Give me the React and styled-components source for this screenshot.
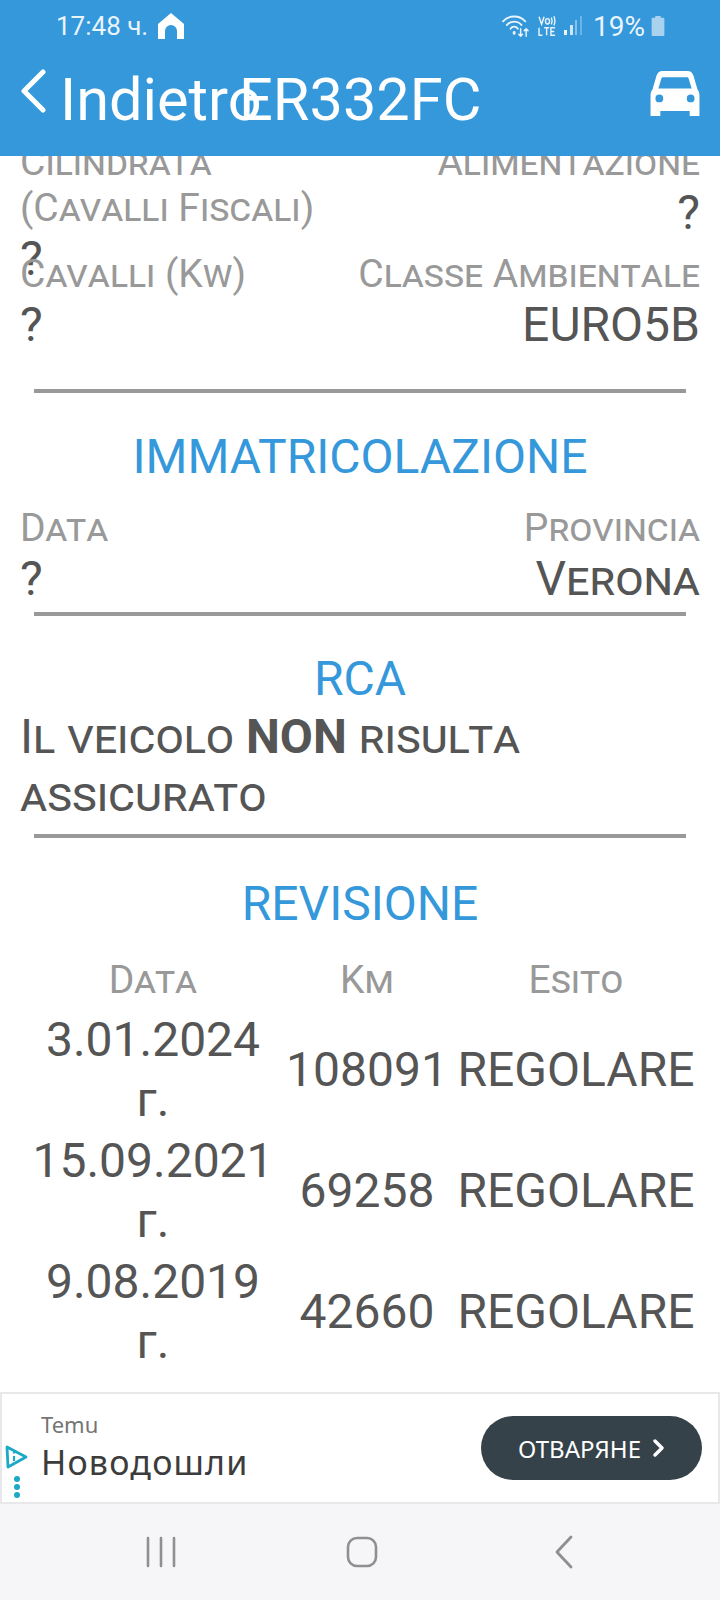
import React from 'react';
import styled, { createGlobalStyle } from 'styled-components';

const Global = createGlobalStyle`
  html, body { margin: 0; padding: 0; background: #fff; }
  body { font-family: Roboto, "Noto Sans", sans-serif; }
`;

const Screen = styled.div`
  width: 720px;
  height: 1600px;
  display: flex;
  flex-direction: column;
  overflow: hidden;
  background: #fff;
`;

const Header = styled.header`
  height: 156px;
  flex: none;
  background: #3498db;
  color: #fff;
  display: flex;
  flex-direction: column;
  position: relative;
  z-index: 2;
`;

const StatusBar = styled.div`
  height: 52px;
  padding: 0 55px 0 56px;
  display: flex;
  align-items: center;
  justify-content: space-between;
`;

const StatusGroup = styled.div`
  display: flex;
  align-items: center;
  gap: ${(p) => p.$gap}px;
  font-size: 26px;
  color: #eaf4fb;
`;

const Percent = styled.span`
  font-size: 28px;
  margin-left: 5px;
`;

const NavBar = styled.div`
  flex: 1;
  display: flex;
  align-items: center;
  padding: 0 20px 8px 21px;
`;

const NavTitle = styled.span`
  font-size: 59.5px;
  line-height: 68px;
  white-space: nowrap;
`;

const BackLabel = styled(NavTitle)`
  width: 179px;
  margin-left: 14px;
`;

const BackSvg = styled.svg`
  margin-top: -18px;
`;

const NavRight = styled.div`
  margin-left: auto;
  display: flex;
  margin-top: -14px;
`;

const Content = styled.main`
  height: 1236px;
  flex: none;
  overflow: hidden;
  padding: 0 20px;
`;

const Scroller = styled.div`
  margin-top: -17px;
`;

const Row = styled.div`
  display: flex;
  justify-content: space-between;
  height: ${(p) => p.$height}px;
  margin-top: ${(p) => p.$top || 0}px;
`;

const Field = styled.div`
  text-align: ${(p) => (p.$right ? 'right' : 'left')};
`;

const Label = styled.div`
  font-size: 39px;
  line-height: 46px;
  color: #999;
  font-variant: small-caps;
`;

const Value = styled.div`
  font-size: 48px;
  line-height: 56px;
  color: #555;
  font-variant: ${(p) => (p.$caps ? 'small-caps' : 'normal')};
`;

const Divider = styled.hr`
  border: 0;
  height: 4px;
  background: #999;
  margin: 0 14px;
`;

const SectionTitle = styled.h2`
  margin: ${(p) => p.$top}px 0 0;
  font-size: 48px;
  line-height: 54px;
  font-weight: 400;
  color: #3498db;
  text-align: center;
`;

const Notice = styled.p`
  margin: 2px 0 10px;
  font-size: 48px;
  line-height: 58px;
  color: #555;
  font-variant: small-caps;
  width: 560px;
  strong { font-variant: normal; }
`;

const Table = styled.div`
  display: grid;
  grid-template-columns: 250px 178px 240px;
  padding: 26px 0 0 8px;
  text-align: center;
  color: #555;
`;

const HeadCell = styled.div`
  font-size: 39px;
  line-height: 46px;
  color: #999;
  font-variant: small-caps;
  padding-bottom: 6px;
`;

const Cell = styled.div`
  font-size: 48px;
  line-height: 60px;
  height: 121px;
  display: flex;
  align-items: center;
  justify-content: center;
`;

const Ad = styled.aside`
  height: 112px;
  flex: none;
  box-sizing: border-box;
  background: #fff;
  border: 2px solid #e8e8ea;
  display: flex;
  align-items: center;
  position: relative;
  padding: 0 16px 0 39px;
`;

const AdBadge = styled.div`
  position: absolute;
  left: 3px;
  top: 51px;
  display: flex;
  flex-direction: column;
  gap: 6px;
`;

const AdText = styled.div`
  flex: 1;
  padding-bottom: 2px;
  font-family: "Noto Sans", sans-serif;
`;

const AdBrand = styled.div`
  font-size: 22px;
  line-height: 28px;
  margin-bottom: 2px;
  color: #757575;
`;

const AdHeadline = styled.div`
  font-size: 34px;
  line-height: 44px;
  color: #3c3c3c;
  letter-spacing: 1.2px;
`;

const AdButton = styled.button`
  width: 221px;
  height: 64px;
  padding: 0;
  border: 0;
  border-radius: 32px;
  background: #36424a;
  color: #fff;
  font-family: "Noto Sans", sans-serif;
  font-size: 24px;
  display: flex;
  align-items: center;
  justify-content: center;
  gap: 12px;
`;

const SystemNav = styled.nav`
  flex: 1;
  background: #f6f6f8;
  display: flex;
  align-items: center;
  justify-content: space-between;
  padding: 0 146px;
  svg:nth-child(2) { margin-right: 6px; }
`;

const HomeIcon = () => (
  <svg width="26" height="26" viewBox="0 0 26 26" fill="#fff">
    <path d="M13 0 L26 11 V26 H19 V18 A6 6 0 0 0 7 18 V26 H0 V11 Z" />
  </svg>
);

const WifiIcon = () => (
  <svg width="30" height="24" viewBox="0 0 30 26" fill="none" stroke="#eaf4fb" strokeWidth="2" strokeLinecap="round">
    <path d="M1 8 C7 1 19 1 25 8" />
    <path d="M5 12 C9 7 17 7 21 12" />
    <path d="M9 16 C11 13 15 13 17 16" />
    <path d="M13 20 v1" strokeWidth="3" />
    <path d="M20 16 v8 M18 22 l2 2 l2 -2 M26 24 v-8 M24 18 l2 -2 l2 2" strokeWidth="1.6" />
  </svg>
);

const VolteIcon = () => (
  <svg width="21" height="22" viewBox="0 0 22 26" fill="none" stroke="#eaf4fb" strokeWidth="1.7">
    <path d="M1 2 L4 11 L7 2" />
    <ellipse cx="11" cy="7.5" rx="2.4" ry="3.2" />
    <path d="M15.5 3 Q17.5 7 15.5 11 M18.5 1.5 Q21 7 18.5 12.5" />
    <path d="M1 15 V24 H5 M7 15 H13 M10 15 V24 M20 15 H15 V24 H20 M15 19.5 H19" />
  </svg>
);

const SignalIcon = () => (
  <svg width="18" height="20" viewBox="0 0 18 20" fill="#eaf4fb">
    <rect x="0" y="14" width="3" height="5" />
    <rect x="6" y="9" width="3" height="10" opacity="0.85" />
    <rect x="11" y="4" width="2" height="15" opacity="0.45" />
    <rect x="16" y="0" width="2" height="19" opacity="0.3" />
  </svg>
);

const BatteryIcon = () => (
  <svg width="14" height="20" viewBox="0 0 14 22" fill="#a9d2ef">
    <path d="M4 0 H10 V2 H13 A1 1 0 0 1 14 3 V21 A1 1 0 0 1 13 22 H1 A1 1 0 0 1 0 21 V3 A1 1 0 0 1 1 2 H4 Z" />
  </svg>
);

const BackChevron = () => (
  <BackSvg width="25" height="44" viewBox="0 0 25 44" fill="none" stroke="#fff" strokeWidth="5" strokeLinecap="round" strokeLinejoin="round">
    <path d="M22 3 L3 22 L22 41" />
  </BackSvg>
);

const CarIcon = () => (
  <svg width="50" height="45" viewBox="0 0 50 46" fill="#fff">
    <path
      fillRule="evenodd"
      d="M12 0 H38 C41 0 43 2 44 5 L48 19 C49 20 50 22 50 25 V46 H40 V41 H10 V46 H0 V25 C0 22 1 20 2 19 L6 5 C7 2 9 0 12 0 Z M11 8 L8 18 H42 L39 8 C38.600 7 38 6.500 37 6.500 H13 C12 6.500 11.400 7 11 8 Z M9 24 A4 4 0 1 0 9 32 A4 4 0 1 0 9 24 Z M41 24 A4 4 0 1 0 41 32 A4 4 0 1 0 41 24 Z"
    />
  </svg>
);

const AdChoices = () => (
  <svg width="23" height="24" viewBox="0 0 23 24" fill="none" stroke="#1ba9c6" strokeWidth="2.800" strokeLinejoin="round">
    <path d="M2 2 L21 12 L3 22 Z" />
    <path d="M9 11 V16" strokeWidth="2.200" />
    <path d="M9 7 V8.500" strokeWidth="2.200" />
  </svg>
);

const AdDots = () => (
  <svg width="18" height="24" viewBox="0 0 18 24" fill="#1ba9c6">
    <circle cx="12" cy="4" r="3" />
    <circle cx="12" cy="12" r="3" />
    <circle cx="12" cy="20" r="3" />
  </svg>
);

const ButtonChevron = () => (
  <svg width="12" height="18" viewBox="0 0 12 18" fill="none" stroke="#fff" strokeWidth="3.400" strokeLinecap="round" strokeLinejoin="round">
    <path d="M2 2 L9 9 L2 16" />
  </svg>
);

const RecentsIcon = () => (
  <svg width="30" height="32" viewBox="0 0 30 32" fill="none" stroke="#8f8f8f" strokeWidth="2.600" strokeLinecap="round">
    <path d="M2 2 V30 M15 2 V30 M28 2 V30" />
  </svg>
);

const HomeKeyIcon = () => (
  <svg width="32" height="32" viewBox="0 0 32 32" fill="none" stroke="#8f8f8f" strokeWidth="2.600">
    <rect x="2" y="2" width="28" height="28" rx="9" />
  </svg>
);

const BackKeyIcon = () => (
  <svg width="20" height="34" viewBox="0 0 20 34" fill="none" stroke="#8f8f8f" strokeWidth="2.800" strokeLinecap="round" strokeLinejoin="round">
    <path d="M17 2 L3 17 L17 32" />
  </svg>
);

const inspections = [
  { date: '3.01.2024 г.', km: '108091', result: 'REGOLARE' },
  { date: '15.09.2021 г.', km: '69258', result: 'REGOLARE' },
  { date: '9.08.2019 г.', km: '42660', result: 'REGOLARE' },
];

export default function App() {
  return (
    <Screen>
      <Global />
      <Header>
        <StatusBar>
          <StatusGroup $gap={10}>
            <span>17:48 ч.</span>
            <HomeIcon />
          </StatusGroup>
          <StatusGroup $gap={6}>
            <WifiIcon />
            <VolteIcon />
            <SignalIcon />
            <Percent>19%</Percent>
            <BatteryIcon />
          </StatusGroup>
        </StatusBar>
        <NavBar>
          <BackChevron />
          <BackLabel>Indietro</BackLabel>
          <NavTitle>ER332FC</NavTitle>
          <NavRight>
            <CarIcon />
          </NavRight>
        </NavBar>
      </Header>

      <Content>
        <Scroller>
          <Row $height={112}>
            <Field>
              <Label>Cilindrata<br />(Cavalli Fiscali)</Label>
              <Value>?</Value>
            </Field>
            <Field $right>
              <Label>Alimentazione</Label>
              <Value>?</Value>
            </Field>
          </Row>
          <Row $height={138}>
            <Field>
              <Label>Cavalli (Kw)</Label>
              <Value>?</Value>
            </Field>
            <Field $right>
              <Label>Classe Ambientale</Label>
              <Value>EURO5B</Value>
            </Field>
          </Row>
          <Divider />
          <SectionTitle $top={37}>IMMATRICOLAZIONE</SectionTitle>
          <Row $height={107} $top={21}>
            <Field>
              <Label>Data</Label>
              <Value>?</Value>
            </Field>
            <Field $right>
              <Label>Provincia</Label>
              <Value $caps>Verona</Value>
            </Field>
          </Row>
          <Divider />
          <SectionTitle $top={36}>RCA</SectionTitle>
          <Notice>Il veicolo <strong>NON</strong> risulta assicurato</Notice>
          <Divider />
          <SectionTitle $top={39}>REVISIONE</SectionTitle>
          <Table>
            <HeadCell>Data</HeadCell>
            <HeadCell>Km</HeadCell>
            <HeadCell>Esito</HeadCell>
            {inspections.map((item) => (
              <React.Fragment key={item.date}>
                <Cell>{item.date}</Cell>
                <Cell>{item.km}</Cell>
                <Cell>{item.result}</Cell>
              </React.Fragment>
            ))}
          </Table>
        </Scroller>
      </Content>

      <Ad>
        <AdBadge>
          <AdChoices />
          <AdDots />
        </AdBadge>
        <AdText>
          <AdBrand>Temu</AdBrand>
          <AdHeadline>Новодошли</AdHeadline>
        </AdText>
        <AdButton>
          ОТВАРЯНЕ
          <ButtonChevron />
        </AdButton>
      </Ad>
      <SystemNav>
        <RecentsIcon />
        <HomeKeyIcon />
        <BackKeyIcon />
      </SystemNav>
    </Screen>
  );
}
